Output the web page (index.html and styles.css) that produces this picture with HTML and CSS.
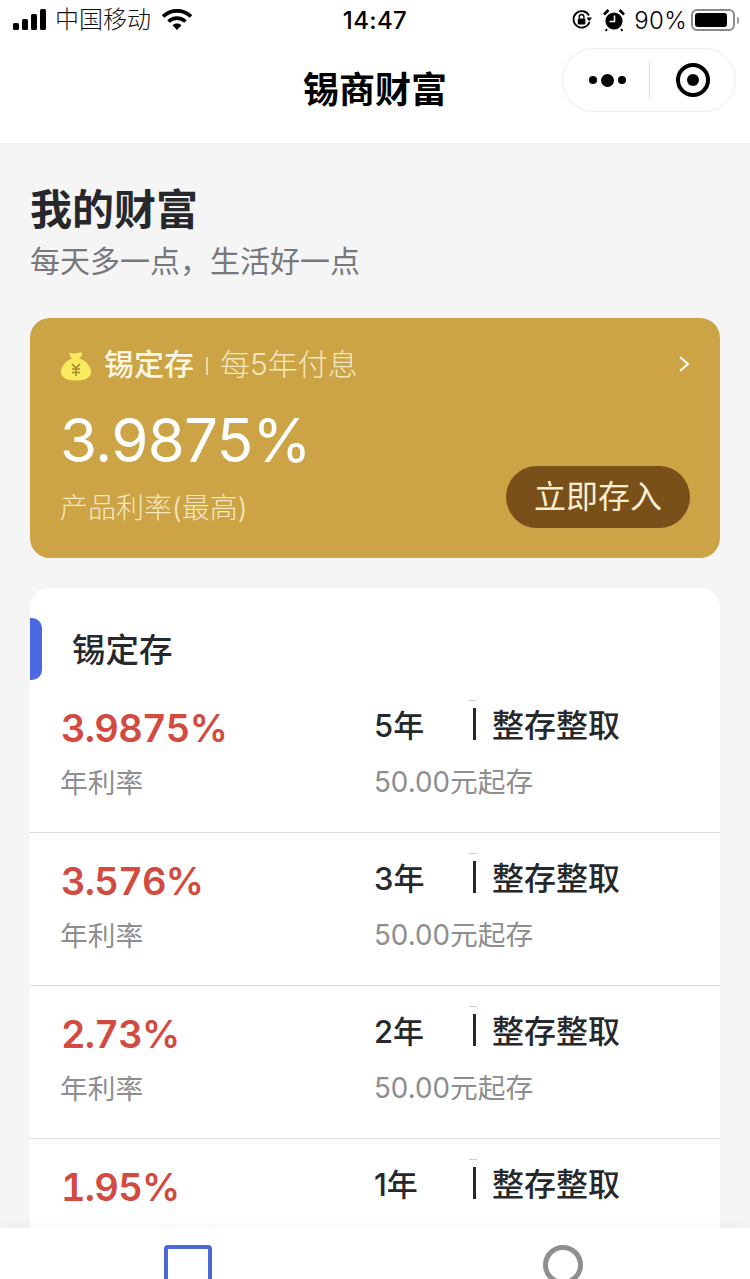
FILE: index.html
```html
<!DOCTYPE html>
<html lang="zh-CN">
<head>
<meta charset="utf-8">
<title>锡商财富</title>
<link rel="stylesheet" href="styles.css">
</head>
<body>
<div class="app">
  <header class="top">
    <div class="status">
      <div class="status-left">
        <svg class="signal" width="34" height="22" viewBox="0 0 34 22"><rect x="0" y="14" width="6" height="7" rx="1.5"/><rect x="9" y="10" width="6" height="11" rx="1.5"/><rect x="18" y="5" width="6" height="16" rx="1.5"/><rect x="27" y="0" width="6" height="21" rx="1.5"/></svg>
        <span class="carrier">中国移动</span>
        <svg class="wifi" width="30" height="22" viewBox="0 0 30 22"><path d="M1 7.5C9 0 21 0 29 7.5" fill="none" stroke="#000" stroke-width="3.6"/><path d="M6.5 12.5C11.5 8 18.5 8 23.5 12.5" fill="none" stroke="#000" stroke-width="3.6"/><path d="M10.5 16.2C13 14 17 14 19.5 16.2L15 21Z"/></svg>
      </div>
      <div class="clock">14:47</div>
      <div class="status-right">
        <svg width="22" height="22" viewBox="0 0 22 22"><path d="M18.5 13A8.2 8.2 0 1 1 18 6.5" fill="none" stroke="#000" stroke-width="1.8"/><path d="M15.5 8.5H21L18.3 12.5Z"/><rect x="6.8" y="9.5" width="7.6" height="6" rx="1"/><path d="M8.3 9.5V7.8a2.3 2.3 0 0 1 4.6 0V9.5" fill="none" stroke="#000" stroke-width="1.4"/></svg>
        <svg class="alarm" width="22" height="24" viewBox="0 0 22 24"><circle cx="11" cy="13" r="8.6"/><path d="M1 6.5L5.5 2M16.5 2L21 6.5" stroke="#000" stroke-width="2.6"/><path d="M4 21l-1.5 2M18 21l1.5 2" stroke="#000" stroke-width="1.8"/><path d="M11.5 7.5V13.5H6.5" fill="none" stroke="#fff" stroke-width="1.5"/></svg>
        <span class="pct">90%</span>
        <div class="battery"><div class="battery-fill"></div></div>
        <div class="battery-tip"></div>
      </div>
    </div>
    <div class="nav">
      <h1 class="nav-title">锡商财富</h1>
      <div class="capsule">
        <div class="dots"><i class="dot"></i><i class="dot dot-big"></i><i class="dot"></i></div>
        <div class="capsule-line"></div>
        <div class="target"><i class="target-core"></i></div>
      </div>
    </div>
  </header>

  <main class="main">
    <section class="intro">
      <h2 class="intro-title">我的财富</h2>
      <p class="intro-sub">每天多一点，生活好一点</p>
    </section>

    <section class="promo">
      <div class="promo-head">
        <svg class="bag" width="32" height="32" viewBox="0 0 32 32"><path d="M10 2.5c2 1 3 1.2 6 .8 3-.4 5-1.3 6-.3 1 1.2-1 4-2.5 5.5C26 11 31 16 31 22c0 6-6 8.5-15 8.5S1 28 1 22C1 16 6 11 12 8.5 10.5 7 8.5 3.5 10 2.5Z" fill="#f7ea5c"/><path d="M12 14l4 4 4-4M12 19h8M12 22.5h8M16 18v8" fill="none" stroke="#a8862f" stroke-width="1.6"/></svg>
        <span class="promo-name">锡定存</span>
        <i class="promo-sep"></i>
        <span class="promo-term">每5年付息</span>
        <svg class="chev" width="12" height="18" viewBox="0 0 12 18"><path d="M2 2l8 7-8 7" fill="none" stroke="#fff" stroke-width="2"/></svg>
      </div>
      <div class="promo-rate">3.9875%</div>
      <div class="promo-foot">
        <span class="promo-label">产品利率(最高)</span>
        <span class="promo-btn">立即存入</span>
      </div>
    </section>

    <section class="list">
      <div class="list-head">
        <i class="list-mark"></i>
        <h3 class="list-title">锡定存</h3>
      </div>
      <div class="row">
        <div class="cell-rate"><div class="rate">3.9875%</div><div class="note">年利率</div></div>
        <div class="cell-info"><div class="info-top"><span class="term">5年</span><i class="tick"></i><span class="kind">整存整取</span></div><div class="note">50.00元起存</div></div>
      </div>
      <div class="row">
        <div class="cell-rate"><div class="rate">3.576%</div><div class="note">年利率</div></div>
        <div class="cell-info"><div class="info-top"><span class="term">3年</span><i class="tick"></i><span class="kind">整存整取</span></div><div class="note">50.00元起存</div></div>
      </div>
      <div class="row">
        <div class="cell-rate"><div class="rate">2.73%</div><div class="note">年利率</div></div>
        <div class="cell-info"><div class="info-top"><span class="term">2年</span><i class="tick"></i><span class="kind">整存整取</span></div><div class="note">50.00元起存</div></div>
      </div>
      <div class="row">
        <div class="cell-rate"><div class="rate">1.95%</div></div>
        <div class="cell-info"><div class="info-top"><span class="term">1年</span><i class="tick"></i><span class="kind">整存整取</span></div></div>
      </div>
    </section>
  </main>

  <nav class="tabbar">
    <div class="tab"><i class="tab-square"></i></div>
    <div class="tab"><i class="tab-circle"></i></div>
  </nav>
</div>
</body>
</html>
```
FILE: styles.css
```css
* { box-sizing: border-box; }
html, body { margin: 0; padding: 0; }
body {
  width: 750px;
  height: 1279px;
  overflow: hidden;
  font-family: "Inter", "Noto Sans CJK SC", sans-serif;
  color: #26282c;
  background: #f5f5f5;
}
h1, h2, h3, p { margin: 0; }
i { display: block; }
.app { height: 1279px; display: flex; flex-direction: column; overflow: hidden; }

.top { flex: none; height: 144px; background: #fff; }
.status {
  height: 40px;
  padding: 0 11px 0 13px;
  display: grid;
  grid-template-columns: 1fr auto 1fr;
  align-items: center;
  color: #000;
}
.status-left { display: flex; align-items: center; gap: 8px; }
.carrier { font-size: 24px; line-height: 40px; color: #111; font-weight: 300; }
.wifi { margin-left: 3px; }
.clock { font-size: 24px; font-weight: 500; letter-spacing: 0.4px; margin-left: -2px; }
.status-right { display: flex; align-items: center; justify-content: flex-end; }
.alarm { margin-left: 10px; }
.pct { font-size: 24px; margin-left: 9px; font-weight: 300; letter-spacing: 0.3px; }
.battery {
  width: 44px;
  height: 22px;
  margin-left: 4px;
  border: 2px solid #8a8a8a;
  border-radius: 6px;
  padding: 2px;
}
.battery-fill { width: 32px; height: 14px; background: #000; border-radius: 3px; }
.battery-tip { width: 2px; height: 7px; background: #9a9a9a; margin-left: 2px; border-radius: 0 2px 2px 0; }

.nav { position: relative; height: 104px; display: flex; justify-content: center; padding-top: 26px; border-bottom: 1px solid #f0f0f0; }
.nav-title { font-size: 36px; line-height: 48px; font-weight: 600; color: #000; }
.capsule {
  position: absolute;
  left: 562px;
  top: 8px;
  width: 174px;
  height: 64px;
  border: 1px solid #eeeeee;
  border-radius: 32px;
  background: #fff;
  display: flex;
  align-items: center;
}
.dots { width: 86px; display: flex; justify-content: center; align-items: center; gap: 4px; padding-left: 2px; }
.dot { width: 8px; height: 8px; border-radius: 50%; background: #000; }
.dot-big { width: 13px; height: 13px; }
.capsule-line { width: 1px; height: 38px; background: #dcdcdc; }
.target {
  width: 34px;
  height: 34px;
  margin-left: 26px;
  border: 4px solid #000;
  border-radius: 50%;
  display: flex;
  align-items: center;
  justify-content: center;
}
.target-core { width: 12px; height: 12px; border-radius: 50%; background: #000; }

.main { flex: 1; min-height: 0; overflow: hidden; padding: 37px 30px 0; }
.intro-title { font-size: 42px; line-height: 58px; font-weight: 600; color: #26282c; }
.intro-sub { font-size: 30px; line-height: 44px; color: #77787c; margin-bottom: -1px; }

.promo {
  margin-top: 36px;
  height: 240px;
  background: #cca345;
  border-radius: 20px;
  padding: 28px 30px 0;
  color: #fff;
}
.promo-head { display: flex; align-items: center; height: 40px; }
.bag { margin-right: 12px; }
.promo-name { font-size: 30px; font-weight: 500; color: #fdf7e3; line-height: 40px; padding-bottom: 4px; }
.promo-sep { width: 2px; height: 18px; background: #ead79f; margin: 0 12px; }
.promo-term { font-size: 30px; color: #f5e8c0; font-weight: 300; line-height: 40px; padding-bottom: 4px; }
.chev { margin-left: auto; margin-top: -4px; }
.promo-rate { font-size: 60px; letter-spacing: -0.7px; line-height: 76px; margin-top: 16px; font-weight: 400; color: #fff; }
.promo-foot { display: flex; justify-content: space-between; align-items: flex-end; margin-top: -12px; }
.promo-label { font-size: 28px; line-height: 40px; color: #f5e8c0; font-weight: 300; }
.promo-btn {
  width: 184px;
  height: 62px;
  border-radius: 31px;
  background: #79501a;
  color: #f9eed0;
  font-size: 32px;
  line-height: 62px;
  text-align: center;
}

.list { margin-top: 30px; background: #fff; border-radius: 20px 20px 0 0; }
.list-head { height: 92px; display: flex; align-items: center; position: relative; padding-left: 42px; }
.list-mark { position: absolute; left: 0; top: 30px; width: 12px; height: 62px; background: #4a69e2; border-radius: 0 10px 10px 0; }
.list-title { font-size: 33.5px; font-weight: 500; padding-top: 26px; color: #26282c; }
.row {
  height: 153px;
  padding: 23px 30px 0;
  display: flex;
  border-bottom: 1px solid #dedede;
}
.cell-rate { width: 314px; }
.rate { font-size: 38px; letter-spacing: -0.75px; line-height: 51px; font-weight: 600; color: #d24a40; font-variant-numeric: tabular-nums; padding-left: 1px; }
.note { font-size: 27.75px; line-height: 40px; color: #8e8e90; margin-top: 9px; }
.info-top { display: flex; align-items: center; height: 48px; margin: -4px 0 15px; position: relative; }
.info-top::before { content: ""; position: absolute; left: 95px; top: 1px; width: 8px; height: 1px; background: #cfcfcf; }
.info-top + .note { margin-top: 0; }
.term { width: 99px; font-size: 31px; font-weight: 500; color: #26282c; }
.tick { width: 3px; height: 32px; background: #26282c; margin: 2px 16px 0 0; }
.kind { font-size: 32px; font-weight: 500; color: #26282c; }

.tabbar {
  flex: none;
  height: 51px;
  background: #fff;
  display: flex;
  overflow: hidden;
  box-shadow: 0 -4px 12px rgba(0,0,0,0.03);
  position: relative;
}
.tab { width: 375px; display: flex; justify-content: center; padding-top: 17px; }
.tab-square { width: 48px; height: 48px; border: 4px solid #4a69d6; border-radius: 4px; }
.tab-circle { width: 40px; height: 40px; border: 5px solid #8f8f8f; border-radius: 50%; }
```
